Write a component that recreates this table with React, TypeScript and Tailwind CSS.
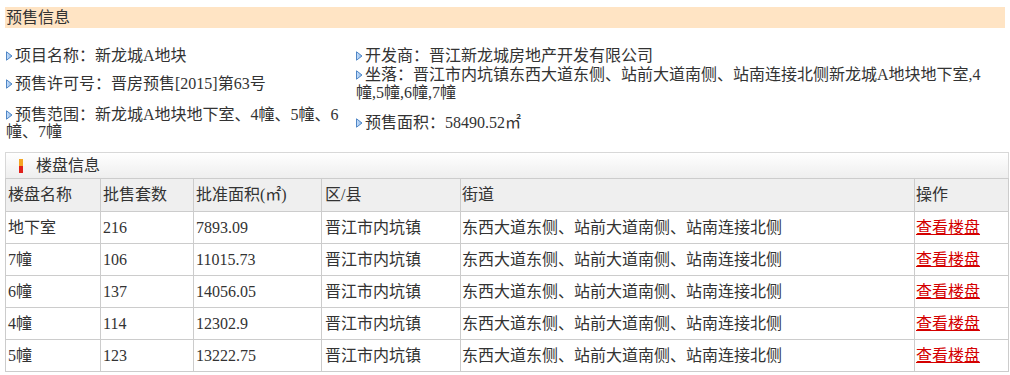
const rows = [
  { name: '地下室', count: '216', area: '7893.09' },
  { name: '7幢', count: '106', area: '11015.73' },
  { name: '6幢', count: '137', area: '14056.05' },
  { name: '4幢', count: '114', area: '12302.9' },
  { name: '5幢', count: '123', area: '13222.75' },
]

const cols =
  'grid grid-cols-[95px_93px_128px_139px_454px_1fr]'

function Arrow() {
  return (
    <svg
      width="7"
      height="10"
      viewBox="0 0 7 10"
      className="mr-[2px] inline-block shrink-0 align-[-1px]"
    >
      <defs>
        <linearGradient id="ag" x1="0" y1="0" x2="1" y2="0">
          <stop offset="0" stopColor="#cfe3fb" />
          <stop offset="1" stopColor="#7fb0e8" />
        </linearGradient>
      </defs>
      <path
        d="M0.5 0.8 L6 5 L0.5 9.2 Z"
        fill="url(#ag)"
        stroke="#4f86c6"
        strokeWidth="1"
        strokeLinejoin="round"
      />
    </svg>
  )
}

export default function App() {
  return (
    <div className="h-[375px] w-[1010px] overflow-hidden bg-white font-['Liberation_Serif','Noto_Sans_CJK_SC',serif] text-[16px] text-[#333]">
      <div className="px-[5px] pt-[7px]">
        <div className="h-[21px] bg-[#ffe4c4] pl-[1px] leading-[21px]">
          预售信息
        </div>
      </div>

      <div className="mt-[19px] grid grid-cols-[350px_1fr] grid-rows-[18px_38px_40px] items-center pl-[6px] leading-[18px]">
        <div className="flex items-center whitespace-nowrap">
          <Arrow />
          项目名称：新龙城A地块
        </div>
        <div className="flex items-center whitespace-nowrap">
          <Arrow />
          开发商：晋江新龙城房地产开发有限公司
        </div>

        <div className="flex items-center whitespace-nowrap">
          <Arrow />
          预售许可号：晋房预售[2015]第63号
        </div>
        <div className="whitespace-nowrap">
          <div className="flex items-center">
            <Arrow />
            坐落：晋江市内坑镇东西大道东侧、站前大道南侧、站南连接北侧新龙城A地块地下室,4
          </div>
          <div>幢,5幢,6幢,7幢</div>
        </div>

        <div className="whitespace-nowrap leading-[17px]">
          <div className="flex items-center">
            <Arrow />
            预售范围：新龙城A地块地下室、4幢、5幢、6
          </div>
          <div>幢、7幢</div>
        </div>
        <div className="flex items-center whitespace-nowrap">
          <Arrow />
          预售面积：58490.52㎡
        </div>
      </div>

      <div className="ml-[5px] mt-[9px] w-[1004px]">
        <div className="flex h-[26px] items-center border-x border-t border-[#d8d8d8] bg-gradient-to-b from-white to-[#eeeeee]">
          <span className="ml-[13px] flex h-[14px] w-[4px] flex-col">
            <span className="h-1/2 bg-[#f5a623]" />
            <span className="h-1/2 bg-[#e0201c]" />
          </span>
          <span className="ml-[13px]">楼盘信息</span>
        </div>

        <div className="border border-b-0 border-[#cccccc]">
          <div
            className={`${cols} h-[33px] items-center border-b border-[#cccccc] bg-[#efefef]`}
          >
            <div className="flex h-full items-center border-r border-[#cccccc] pl-[2px]">
              楼盘名称
            </div>
            <div className="flex h-full items-center border-r border-[#cccccc] pl-[2px]">
              批售套数
            </div>
            <div className="flex h-full items-center border-r border-[#cccccc] pl-[2px]">
              批准面积(㎡)
            </div>
            <div className="flex h-full items-center border-r border-[#cccccc] pl-[3px]">
              区/县
            </div>
            <div className="flex h-full items-center border-r border-[#cccccc] pl-[1px]">
              街道
            </div>
            <div className="flex h-full items-center pl-[1px]">操作</div>
          </div>

          {rows.map((row) => (
            <div
              key={row.name}
              className={`${cols} h-[32px] items-center border-b border-[#cccccc]`}
            >
              <div className="flex h-full items-center border-r border-[#cccccc] pl-[2px]">
                {row.name}
              </div>
              <div className="flex h-full items-center border-r border-[#cccccc] pl-[2px]">
                {row.count}
              </div>
              <div className="flex h-full items-center border-r border-[#cccccc] pl-[2px]">
                {row.area}
              </div>
              <div className="flex h-full items-center border-r border-[#cccccc] pl-[3px]">
                晋江市内坑镇
              </div>
              <div className="flex h-full items-center border-r border-[#cccccc] pl-[1px]">
                东西大道东侧、站前大道南侧、站南连接北侧
              </div>
              <div className="flex h-full items-center pl-[1px]">
                <a href="#" className="text-[#d40000] underline">
                  查看楼盘
                </a>
              </div>
            </div>
          ))}
        </div>
      </div>
    </div>
  )
}
